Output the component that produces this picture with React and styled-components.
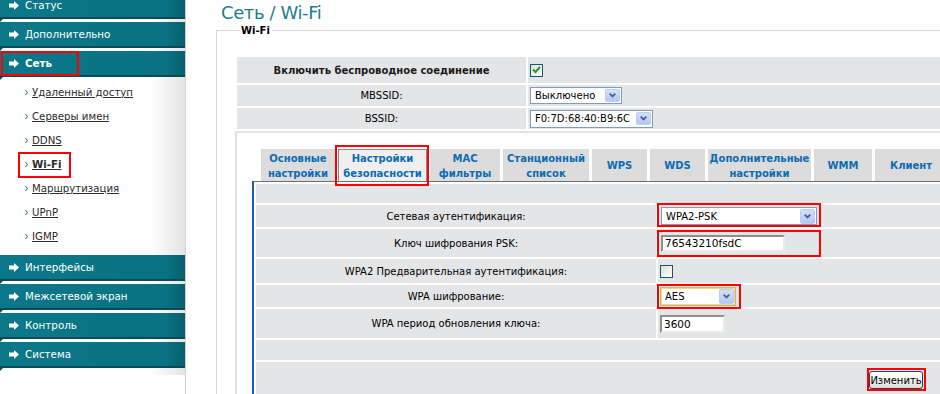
import React from 'react';
import styled, { createGlobalStyle, css } from 'styled-components';

const FONT = `"DejaVu Sans", Verdana, sans-serif`;

const GlobalStyle = createGlobalStyle`
  html, body { margin: 0; padding: 0; background: #fff; overflow: hidden; }
  body { font-family: ${FONT}; font-size: 10px; color: #000; }
`;

const Page = styled.div`
  display: flex;
  width: 960px;
  height: 420px;
  margin-top: -7px;
`;

/* ---------- sidebar ---------- */
const Sidebar = styled.nav`
  width: 185px;
  flex: none;
  border-right: 1px solid #d2d2d2;
`;

const Menu = styled.div`
  padding-bottom: 4px;
  background: linear-gradient(to right, #fff 0, #fff 150px, #e4e4e4 185px);
`;

const Bar = styled.div`
  position: relative;
  box-sizing: border-box;
  height: 26px;
  display: flex;
  align-items: center;
  gap: 6px;
  padding-left: 9px;
  margin-bottom: 3px;
  background: linear-gradient(to right, #0b7889 0, #0a7282 90%, #075f6c 100%);
  border-bottom: 2px solid #0a4b56;
  color: #fff;
  font-size: 10.3px;
  font-weight: ${p => (p.$active ? 700 : 400)};
  &::after {
    content: '';
    position: absolute;
    left: 0;
    bottom: -5px;
    border-top: 3px solid #0a4b56;
    border-right: 3px solid transparent;
  }
  ${p =>
    p.$marked &&
    css`
      &::before {
        content: '';
        position: absolute;
        left: 1px;
        top: 0;
        width: 78px;
        height: 25px;
        box-sizing: border-box;
        border: 2px solid #f00;
      }
    `}
`;

const SubMenu = styled.div`
  padding-bottom: 7px;
`;

const SubItem = styled.div`
  position: relative;
  height: 24px;
  display: flex;
  align-items: center;
  gap: 4px;
  padding-left: 25px;
  ${p =>
    p.$marked &&
    css`
      &::before {
        content: '';
        position: absolute;
        left: 18px;
        top: 0;
        width: 53px;
        height: 26px;
        box-sizing: border-box;
        border: 2px solid #f00;
      }
    `}
`;

const SubLink = styled.a`
  color: #2b2b2b;
  text-decoration: underline;
  font-size: 10.2px;
  font-weight: ${p => (p.$active ? 700 : 400)};
`;

const Arrow = () => (
  <svg width="10" height="9" viewBox="0 0 10 9">
    <path d="M0 2.5H5V0L10 4.5L5 9V6.5H0Z" fill="#fff" />
  </svg>
);

const Bullet = () => (
  <svg width="3" height="5" viewBox="0 0 3 5">
    <path d="M0 0H1L3 2.5L1 5H0L2 2.5Z" fill="#1b7282" />
  </svg>
);

/* ---------- main ---------- */
const Main = styled.main`
  flex: 1;
  min-width: 0;
  padding: 8px 10px 0 30px;
`;

const Title = styled.h1`
  margin: 0 0 0 5px;
  font-size: 18px;
  line-height: 23px;
  letter-spacing: -0.4px;
  font-weight: normal;
  color: #1d7d8f;
`;

const Fieldset = styled.fieldset`
  margin: 0;
  padding: 0 0 0 18px;
  border: 1px solid #d8d8d8;
  border-right: none;
  border-bottom: none;
  min-width: 0;
`;

const Legend = styled.legend`
  margin-left: 4px;
  padding: 0 2px;
  font-size: 10px;
  font-weight: bold;
  color: #000;
  line-height: 13px;
`;

const TopTable = styled.div`
  display: grid;
  grid-template-columns: 289px 1fr;
  grid-template-rows: 26px 21px 21px;
  gap: 2px;
  margin: 20px 0 0 2px;
`;

const LabelCell = styled.div`
  background: #e4e5e6;
  display: flex;
  align-items: center;
  justify-content: center;
  font-size: 10px;
  font-weight: ${p => (p.$bold ? 700 : 400)};
  color: ${p => (p.$bold ? '#1a1a1a' : '#000')};
`;

const ValueCell = styled.div`
  background: #e4e5e6;
  display: flex;
  align-items: center;
  padding-left: ${p => p.$pad ?? 2}px;
`;

const TabBox = styled.div`
  margin-top: 2px;
  border-top: 2px solid #e2e2e2;
  border-left: 2px solid #e2e2e2;
  padding: 16px 0 0 15px;
`;

const Tabs = styled.div`
  display: flex;
  gap: 3px;
  margin-left: 9px;
  align-items: flex-end;
`;

const Tab = styled.div`
  position: relative;
  flex: none;
  box-sizing: border-box;
  width: ${p => p.$w}px;
  height: 32px;
  display: flex;
  align-items: center;
  justify-content: center;
  text-align: center;
  background: ${p => (p.$active ? '#efefef' : '#dcdcdc')};
  border: ${p => (p.$active ? '1px solid #8c8c8c' : '1px solid #dcdcdc')};
  border-bottom: none;
  color: #0c6bb2;
  font-size: 10px;
  font-weight: bold;
  line-height: 15px;
  ${p =>
    p.$marked &&
    css`
      &::after {
        content: '';
        position: absolute;
        left: -4px;
        right: -3px;
        top: -5px;
        bottom: -5px;
        border: 2px solid #f00;
      }
    `}
`;

const Panel = styled.div`
  border-top: 1px solid #6e6e6e;
  border-left: 2px solid #1d55c9;
  padding: 2px 0 0 2px;
  display: grid;
  grid-template-columns: 400px 1fr;
  gap: 2px;
  grid-template-rows: 19px 22px 28px 24px 22px 29px 20px 40px;
`;

const FullRow = styled.div`
  grid-column: 1 / -1;
  background: #e4e5e6;
  display: flex;
  justify-content: flex-end;
  align-items: flex-start;
  padding-right: ${p => p.$pr ?? 0}px;
  padding-top: ${p => p.$pt ?? 0}px;
`;

/* ---------- XP controls ---------- */
const Marked = styled.span`
  position: relative;
  display: inline-flex;
  &::after {
    content: '';
    position: absolute;
    left: ${p => p.$l}px;
    top: ${p => p.$t}px;
    width: ${p => p.$w}px;
    height: ${p => p.$h}px;
    box-sizing: border-box;
    border: 2px solid #f00;
  }
`;

const SelectBox = styled.div`
  box-sizing: border-box;
  display: inline-flex;
  align-items: center;
  width: ${p => p.$w}px;
  height: ${p => p.$h ?? 17}px;
  border: 1px solid ${p => (p.$gold ? '#d8b460' : '#7f9db9')};
  box-shadow: ${p => (p.$gold ? 'inset 0 0 0 1px #f4d68a' : 'none')};
  background: #fff;
  padding-left: 4px;
  font-size: 10px;
  color: #000;
`;

const SelectText = styled.span`
  flex: 1;
  white-space: nowrap;
  overflow: hidden;
`;

const SelectButton = styled.span`
  flex: none;
  width: 15px;
  height: ${p => (p.$big ? 15 : 13)}px;
  margin-right: 1px;
  box-sizing: border-box;
  border-radius: 2px;
  border: 1px solid #bccdf3;
  background: linear-gradient(#d3e0fd, #b3c8f5);
  display: flex;
  align-items: center;
  justify-content: center;
`;

const Chevron = () => (
  <svg width="7" height="5" viewBox="0 0 7 5">
    <path d="M0.7 0.7L3.5 3.5L6.3 0.7" fill="none" stroke="#4d6185" strokeWidth="1.8" />
  </svg>
);

const Select = ({ w, h, gold, big, children }) => (
  <SelectBox $w={w} $h={h} $gold={gold}>
    <SelectText>{children}</SelectText>
    <SelectButton $big={big}>
      <Chevron />
    </SelectButton>
  </SelectBox>
);

const TextInput = styled.div`
  box-sizing: border-box;
  width: ${p => p.$w}px;
  height: ${p => p.$h ?? 17}px;
  border-top: 2px solid #8e8e8e;
  border-left: 2px solid #8e8e8e;
  border-right: 2px solid #ebebeb;
  border-bottom: 2px solid #ebebeb;
  background: #fff;
  display: flex;
  align-items: center;
  padding-left: 2px;
  font-size: 10.5px;
  color: #000;
`;

const CheckBox = styled.span`
  box-sizing: border-box;
  width: 13px;
  height: 13px;
  border: 1px solid #1c5180;
  background: linear-gradient(135deg, #dcdcd7, #fff);
  display: inline-flex;
  align-items: center;
  justify-content: center;
`;

const XPButton = styled.button`
  box-sizing: border-box;
  width: 54px;
  height: 18px;
  padding: 0;
  border: 1px solid #1f3d6e;
  border-radius: 3px;
  background: linear-gradient(#ffffff, #f0f0ea 60%, #dcdcd3);
  font-family: ${FONT};
  font-size: 10px;
  color: #000;
`;

const Check = () => (
  <svg width="9" height="8" viewBox="0 0 9 8">
    <path d="M1 3.5L3.5 6L8 1" fill="none" stroke="#21a121" strokeWidth="2" />
  </svg>
);

const sideTop = ['Статус', 'Дополнительно'];
const subItems = ['Удаленный доступ', 'Серверы имен', 'DDNS', 'Wi-Fi', 'Маршрутизация', 'UPnP', 'IGMP'];
const sideBottom = ['Интерфейсы', 'Межсетевой экран', 'Контроль', 'Система'];

const tabs = [
  { w: 74, t: ['Основные', 'настройки'] },
  { w: 89, t: ['Настройки', 'безопасности'], active: true },
  { w: 70, t: ['MAC', 'фильтры'] },
  { w: 86, t: ['Станционный', 'список'] },
  { w: 55, t: ['WPS'] },
  { w: 55, t: ['WDS'] },
  { w: 103, t: ['Дополнительные', 'настройки'] },
  { w: 58, t: ['WMM'] },
  { w: 72, t: ['Клиент'] },
];

export default function App() {
  return (
    <>
      <GlobalStyle />
      <Page>
        <Sidebar>
          <Menu>
            {sideTop.map(s => (
              <Bar key={s}>
                <Arrow />
                {s}
              </Bar>
            ))}
            <Bar $active $marked>
              <Arrow />
              Сеть
            </Bar>
            <SubMenu>
              {subItems.map(s => (
                <SubItem key={s} $marked={s === 'Wi-Fi'}>
                  <Bullet />
                  <SubLink href="#" $active={s === 'Wi-Fi'}>
                    {s}
                  </SubLink>
                </SubItem>
              ))}
            </SubMenu>
            {sideBottom.map(s => (
              <Bar key={s}>
                <Arrow />
                {s}
              </Bar>
            ))}
          </Menu>
        </Sidebar>

        <Main>
          <Title>Сеть / Wi-Fi</Title>
          <Fieldset>
            <Legend>Wi-Fi</Legend>
            <TopTable>
              <LabelCell $bold>Включить беспроводное соединение</LabelCell>
              <ValueCell>
                <CheckBox>
                  <Check />
                </CheckBox>
              </ValueCell>
              <LabelCell>MBSSID:</LabelCell>
              <ValueCell>
                <Select w={92}>Выключено</Select>
              </ValueCell>
              <LabelCell>BSSID:</LabelCell>
              <ValueCell>
                <Select w={123} h={18}>F0:7D:68:40:B9:6C</Select>
              </ValueCell>
            </TopTable>

            <TabBox>
              <Tabs>
                {tabs.map(t => (
                  <Tab key={t.t.join()} $w={t.w} $active={t.active} $marked={t.active}>
                    <span>
                      {t.t[0]}
                      {t.t[1] && <br />}
                      {t.t[1]}
                    </span>
                  </Tab>
                ))}
              </Tabs>
              <Panel>
                <FullRow />
                <LabelCell>Сетевая аутентификация:</LabelCell>
                <ValueCell $pad={3}>
                  <Marked $l={-4} $t={-4} $w={164} $h={24}>
                    <Select w={156} h={18} big>
                      WPA2-PSK
                    </Select>
                  </Marked>
                </ValueCell>
                <LabelCell>Ключ шифрования PSK:</LabelCell>
                <ValueCell $pad={3}>
                  <Marked $l={-4} $t={-5} $w={164} $h={27}>
                    <TextInput $w={124}>76543210fsdC</TextInput>
                  </Marked>
                </ValueCell>
                <LabelCell>WPA2 Предварительная аутентификация:</LabelCell>
                <ValueCell>
                  <CheckBox />
                </ValueCell>
                <LabelCell>WPA шифрование:</LabelCell>
                <ValueCell>
                  <Marked $l={-3} $t={-3} $w={84} $h={25}>
                    <Select w={76} h={19} gold big>
                      AES
                    </Select>
                  </Marked>
                </ValueCell>
                <LabelCell>WPA период обновления ключа:</LabelCell>
                <ValueCell>
                  <TextInput $w={65} $h={18}>3600</TextInput>
                </ValueCell>
                <FullRow />
                <FullRow $pr={27} $pt={9}>
                  <Marked $l={-2} $t={-3} $w={59} $h={23}>
                    <XPButton>Изменить</XPButton>
                  </Marked>
                </FullRow>
              </Panel>
            </TabBox>
          </Fieldset>
        </Main>
      </Page>
    </>
  );
}
